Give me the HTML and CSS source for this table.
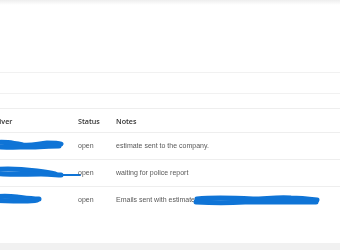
FILE: index.html
```html
<!DOCTYPE html>
<html lang="en">
<head>
<meta charset="utf-8">
<title>Claims</title>
<link rel="stylesheet" href="styles.css">
</head>
<body>
<div class="page">
  <div class="top-shade"></div>
  <div class="panel-space"></div>
  <div class="strip strip-a"></div>
  <div class="strip strip-b"></div>

  <div class="table">
    <div class="row head">
      <div class="cell">Driver</div>
      <div class="cell">Status</div>
      <div class="cell">Notes</div>
    </div>

    <div class="row">
      <div class="cell">
        <svg class="mark" width="72" height="14" viewBox="0 0 72 14">
          <path d="M1 5 C12 3 22 5 32 7 C40 8 46 6 56 5 C62 5 67 5 70 6" />
          <path d="M1 8 C14 10 26 9 38 9 C48 9 58 8 68 8" />
        </svg>
      </div>
      <div class="cell">open</div>
      <div class="cell">estimate sent to the company.</div>
    </div>

    <div class="row">
      <div class="cell">
        <svg class="mark" width="92" height="14" viewBox="0 0 92 14">
          <path d="M1 5 C14 3 30 4 46 6 C54 7 60 8 64 9" />
          <path d="M1 8 C16 10 32 9 50 9 C60 9 66 10 70 10" />
          <path class="thin" d="M56 10 C68 10 80 10 89 10" />
        </svg>
      </div>
      <div class="cell">open</div>
      <div class="cell">waiting for police report</div>
    </div>

    <div class="row">
      <div class="cell">
        <svg class="mark" width="50" height="14" viewBox="0 0 50 14">
          <path d="M1 5 C10 4 18 4 26 5 C34 6 40 7 48 7" />
          <path d="M1 8 C12 9 22 9 32 9 C38 9 42 9 46 8" />
        </svg>
      </div>
      <div class="cell">open</div>
      <div class="cell">Emails sent with estimate<svg class="mark inline" width="124" height="14" viewBox="0 0 124 14">
          <path d="M2 6 C20 4 40 5 58 6 C70 6 82 4 96 5 C106 5 114 6 122 7" />
          <path d="M1 9 C18 10 34 10 50 9 C64 9 80 9 96 9 C106 9 114 9 121 9" />
        </svg></div>
    </div>
  </div>

  <div class="fill"></div>
  <div class="footer-band"></div>
</div>
</body>
</html>
```

FILE: styles.css
```css
html, body {
  margin: 0;
  padding: 0;
  background: #ffffff;
}

body {
  font-family: "Liberation Sans", Arial, sans-serif;
  font-size: 7px;
  color: #595959;
  overflow: hidden;
}

.page {
  width: 340px;
  height: 250px;
  display: flex;
  flex-direction: column;
  overflow: hidden;
}

.top-shade {
  height: 5px;
  flex: none;
  background: linear-gradient(#eeeeee, #ffffff);
}

.panel-space {
  height: 67px;
  flex: none;
}

.strip {
  flex: none;
  border-top: 1px solid #f1f1f1;
}

.strip-a {
  height: 20px;
}

.strip-b {
  height: 14px;
}

/* the table is scrolled a little to the right, so the first column is clipped */
.table {
  flex: none;
  margin-left: -9px;
  border-top: 1px solid #eeeeee;
  will-change: transform;
}

.row {
  display: grid;
  grid-template-columns: 87px 38px 1fr;
  height: 26px;
  border-top: 1px solid #eeeeee;
}

.row.head {
  height: 23px;
  border-top: none;
  font-family: "Open Sans", "Liberation Sans", sans-serif;
  font-weight: 600;
  font-size: 7.2px;
  color: #333333;
}

.cell {
  display: flex;
  align-items: center;
  white-space: nowrap;
  padding-bottom: 2px;
}

.row.head .cell {
  padding-bottom: 0;
  padding-top: 1px;
}

.mark {
  display: block;
  overflow: visible;
  flex: none;
}

.mark.inline {
  display: inline-block;
  margin-top: 1px;
}

.mark path {
  fill: none;
  stroke: #0f74d6;
  stroke-width: 5;
  stroke-linecap: round;
  stroke-linejoin: round;
}

.mark path.thin {
  stroke-width: 2.2;
}

.fill {
  flex: 1 1 auto;
}

.footer-band {
  height: 7px;
  flex: none;
  background: #f1f1f1;
}
```
